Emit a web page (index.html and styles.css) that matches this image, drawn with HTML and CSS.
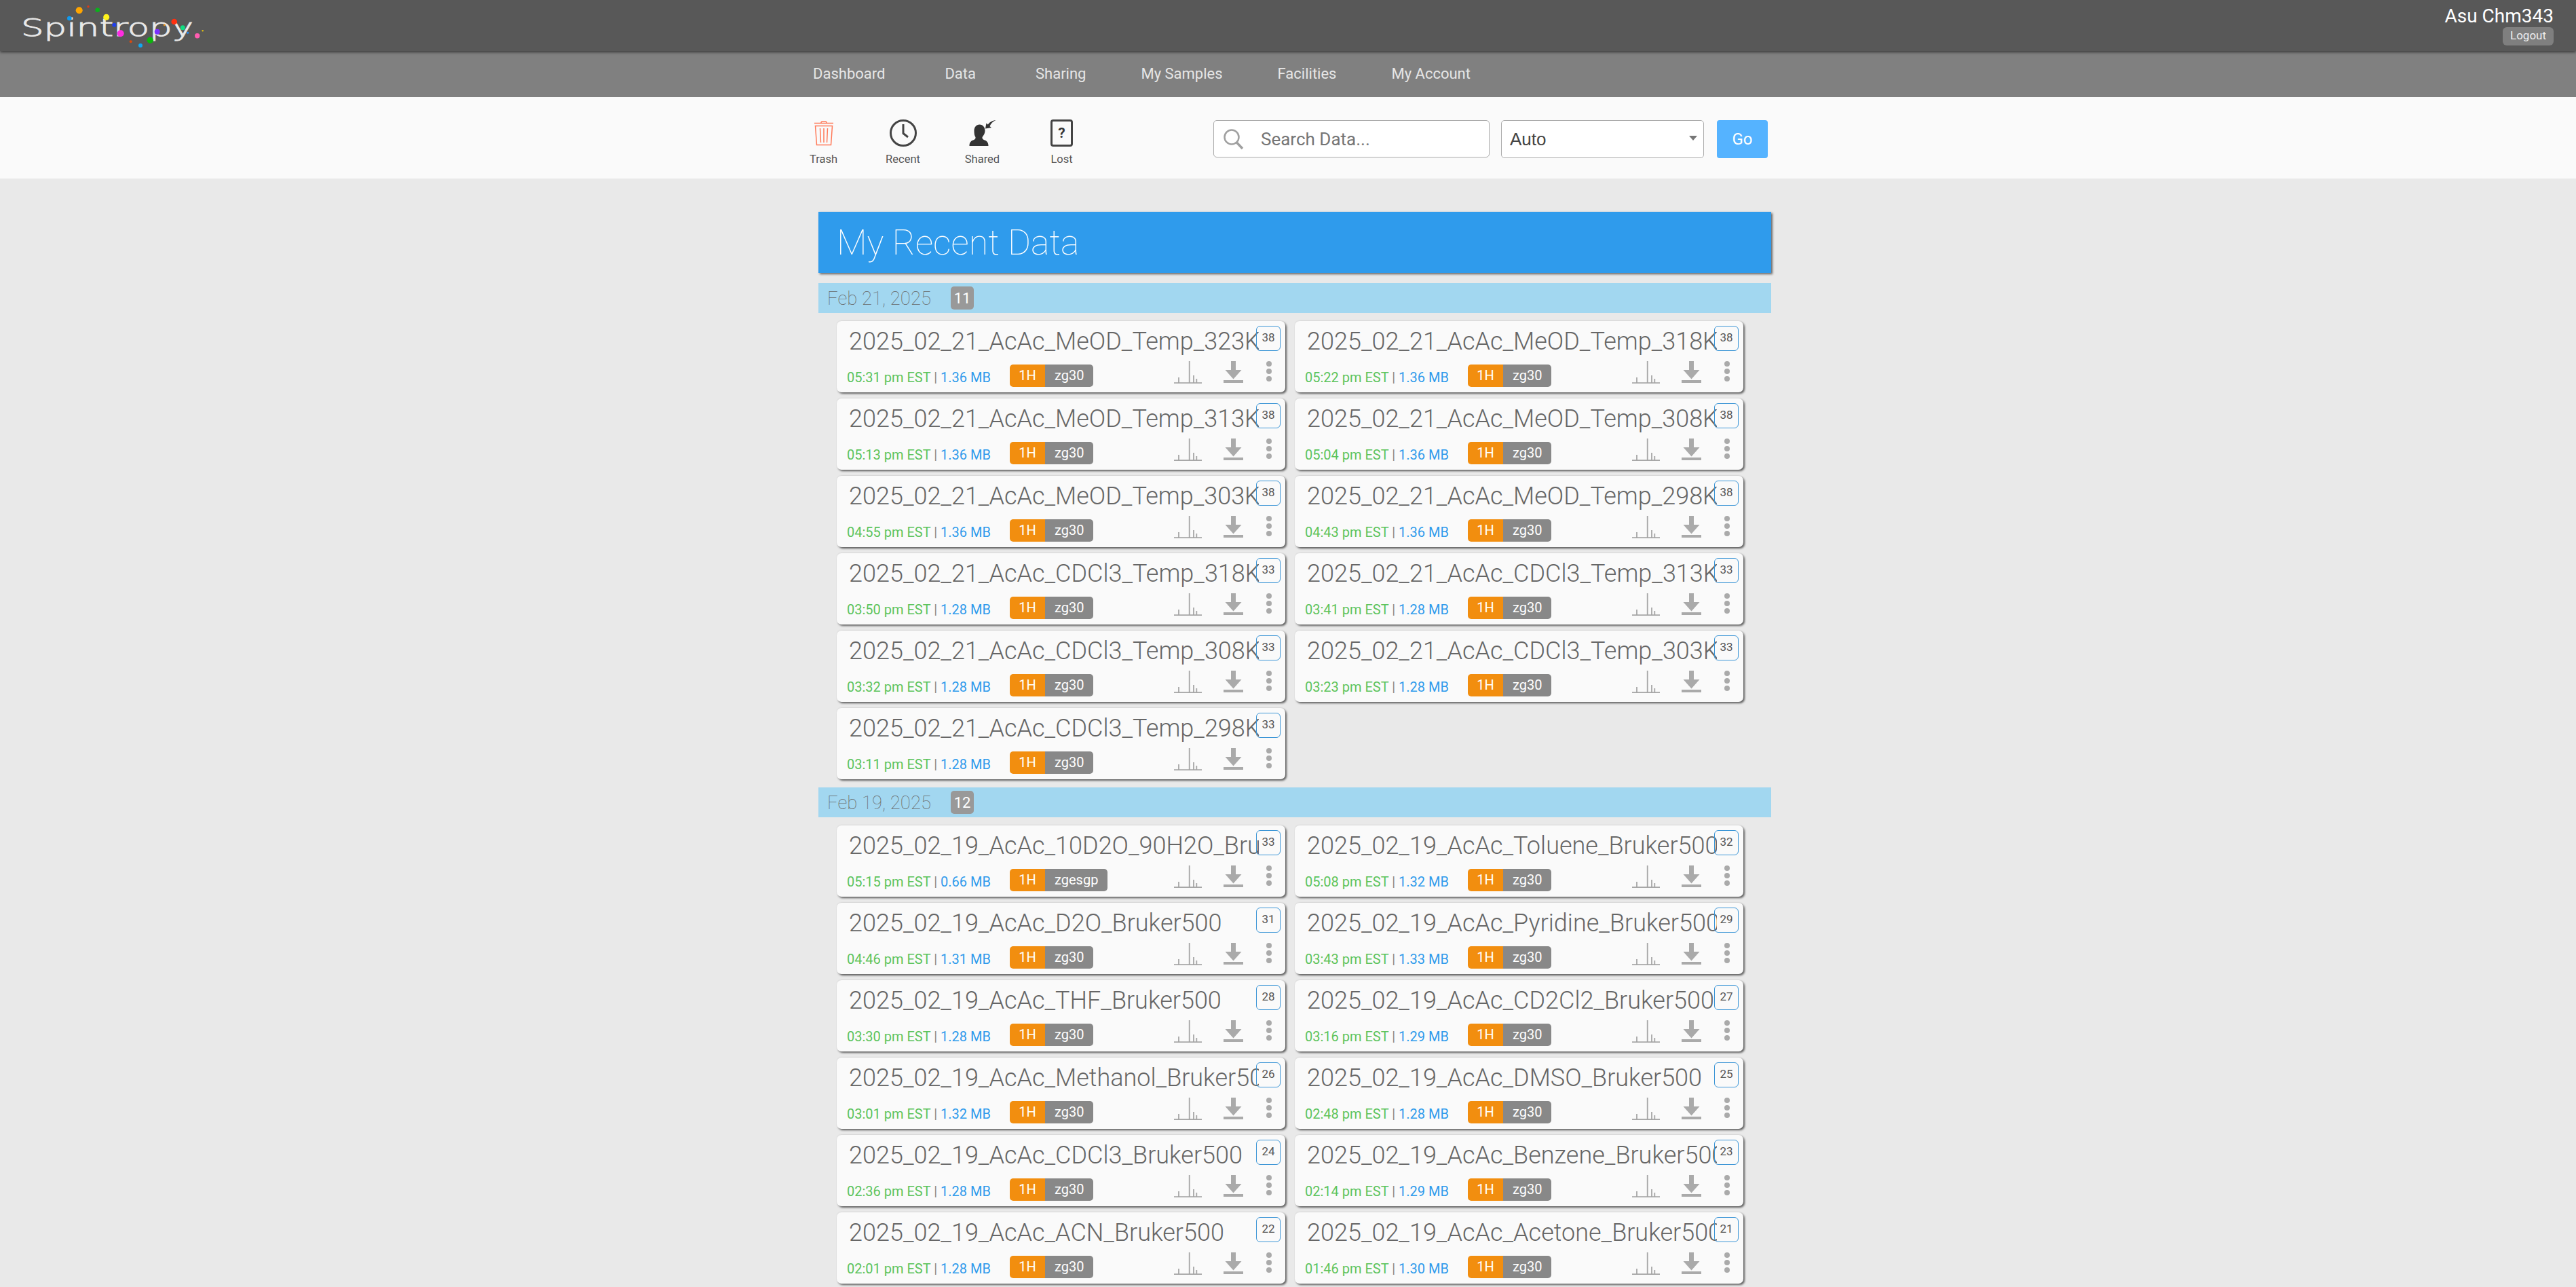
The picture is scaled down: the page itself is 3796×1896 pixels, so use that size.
FILE: index.html
```html
<!DOCTYPE html>
<html lang="en">
<head>
<meta charset="utf-8">
<title>Spintropy</title>
<link rel="stylesheet" href="styles.css">
</head>
<body>
<svg class="defs" width="0" height="0">
  <symbol id="spec" viewBox="0 0 41 33"><path d="M0 32.200H41M7 32V24M22.700 32V0M29 32V21M33.300 32V26" fill="none" stroke="#a6a6a6" stroke-width="1.800"/></symbol>
  <symbol id="down" viewBox="0 0 29 32"><path d="M11 0h7v13h8.500L14.500 26.500 2.500 13H11zM0 28h29v4H0z" fill="#aaa"/></symbol>
  <symbol id="dots" viewBox="0 0 8 30"><circle cx="4" cy="4" r="4" fill="#aaa"/><circle cx="4" cy="15" r="4" fill="#aaa"/><circle cx="4" cy="26" r="4" fill="#aaa"/></symbol>
</svg>
<header class="topbar">
  <svg class="logo" width="310" height="75" viewBox="0 0 310 75">
    <circle cx="168.300" cy="36.700" r="3" fill="#2040ee"/>
    <text class="logo-text" x="31" y="52.500" textLength="254" lengthAdjust="spacingAndGlyphs">Spintropy</text>
    <circle cx="116.700" cy="15.300" r="5" fill="#ffa500"/>
    <circle cx="130" cy="9.700" r="1.700" fill="#d83a1a"/>
    <circle cx="143.700" cy="14.700" r="3.300" fill="#0bb01b"/>
    <circle cx="156.700" cy="25.300" r="4.500" fill="#fff21c"/>
    <circle cx="102.300" cy="27" r="3.300" fill="#1099ee"/>
    <circle cx="177.700" cy="49.300" r="5" fill="#ff2de0"/>
    <circle cx="256.700" cy="32" r="4.300" fill="#ff3010"/>
    <circle cx="242.300" cy="36.700" r="1.500" fill="#e8901a"/>
    <circle cx="269.300" cy="40.700" r="3.500" fill="#10dc80"/>
    <circle cx="231.700" cy="46.700" r="4" fill="#7a30ff"/>
    <circle cx="276.700" cy="48.300" r="1.500" fill="#2090ff"/>
    <circle cx="290.700" cy="52.700" r="3.700" fill="#ff5cb0"/>
    <circle cx="298.700" cy="45.300" r="1.200" fill="#e0c010"/>
    <circle cx="221.300" cy="59.300" r="4.700" fill="#0bb50b"/>
    <circle cx="192.700" cy="61.300" r="2" fill="#d84a10"/>
    <circle cx="207" cy="67" r="3" fill="#10a8f0"/>
  </svg>
  <div class="user">
    <div class="user-name">Asu Chm343</div>
    <div class="logout">Logout</div>
  </div>
</header>
<nav class="navbar">
  <a>Dashboard</a><a>Data</a><a>Sharing</a><a class="tight">My Samples</a><a class="tight">Facilities</a><a class="tight">My Account</a>
</nav>
<section class="toolbar">
  <div class="tools">
    <div class="tool">
      <svg class="tool-icon" width="40" height="40" viewBox="0 0 40 40"><path d="M6 5.500H34M16 5.500V4.200Q16 3 18 3H22Q24 3 24 4.200V5.500M7.500 9.500H32.500L30.500 37.500H9.500ZM14.500 13L15.500 34M20 13V34M25.500 13L24.500 34" fill="none" stroke="#ff7a59" stroke-width="1.500"/></svg>
      <span>Trash</span>
    </div>
    <div class="tool">
      <svg class="tool-icon" width="42" height="40" viewBox="0 0 42 40"><circle cx="21" cy="20" r="18.500" fill="none" stroke="#444" stroke-width="3"/><path d="M21 7V20.500L28 26" fill="none" stroke="#444" stroke-width="3"/></svg>
      <span>Recent</span>
    </div>
    <div class="tool">
      <svg class="tool-icon" width="40" height="40" viewBox="0 0 40 40"><path d="M15.500 7.500C20.500 7.500 23.500 11.500 23.500 16.500C23.500 21 21 24 19.500 26C19 28 20.500 29.500 23 30.500C27 32 28.500 34.500 28.500 39H.5C.5 34.500 2 32 6 30.500C8.500 29.500 10 28 9.500 26C8 24 7.500 21 7.500 16.500C7.500 11.500 10.500 7.500 15.500 7.500Z" fill="#333"/><path d="M24 13.500L25.500 5.500L27.800 7.600C30 4 34 1.500 39.500 1C35 3 32 6 30.500 10L33 12Z" fill="#333"/></svg>
      <span>Shared</span>
    </div>
    <div class="tool">
      <div class="lost-icon">?</div>
      <span>Lost</span>
    </div>
  </div>
  <form class="search">
    <div class="search-box">
      <svg width="32" height="30" viewBox="0 0 32 30"><circle cx="13" cy="12" r="10.500" fill="none" stroke="#a0a0a0" stroke-width="2.500"/><path d="M20.500 20L29 29" stroke="#a0a0a0" stroke-width="3.500"/></svg>
      <span>Search Data...</span>
    </div>
    <div class="select"><span>Auto</span><i class="caret"></i></div>
    <div class="go">Go</div>
  </form>
</section>
<main class="content">
  <h1 class="page-title">My Recent Data</h1>

  <h2 class="date-bar"><span>Feb 21, 2025</span><b>11</b></h2>
  <div class="cards">
    <article class="card"><div class="name">2025_02_21_AcAc_MeOD_Temp_323K</div><span class="count">38</span><div class="meta"><div class="info"><em>05:31 pm EST</em> | <u>1.36 MB</u></div><div class="pill"><b>1H</b><i>zg30</i></div><div class="actions"><svg class="a-spec"><use href="#spec"/></svg><svg class="a-down"><use href="#down"/></svg><svg class="a-dots"><use href="#dots"/></svg></div></div></article>
    <article class="card"><div class="name">2025_02_21_AcAc_MeOD_Temp_318K</div><span class="count">38</span><div class="meta"><div class="info"><em>05:22 pm EST</em> | <u>1.36 MB</u></div><div class="pill"><b>1H</b><i>zg30</i></div><div class="actions"><svg class="a-spec"><use href="#spec"/></svg><svg class="a-down"><use href="#down"/></svg><svg class="a-dots"><use href="#dots"/></svg></div></div></article>
    <article class="card"><div class="name">2025_02_21_AcAc_MeOD_Temp_313K</div><span class="count">38</span><div class="meta"><div class="info"><em>05:13 pm EST</em> | <u>1.36 MB</u></div><div class="pill"><b>1H</b><i>zg30</i></div><div class="actions"><svg class="a-spec"><use href="#spec"/></svg><svg class="a-down"><use href="#down"/></svg><svg class="a-dots"><use href="#dots"/></svg></div></div></article>
    <article class="card"><div class="name">2025_02_21_AcAc_MeOD_Temp_308K</div><span class="count">38</span><div class="meta"><div class="info"><em>05:04 pm EST</em> | <u>1.36 MB</u></div><div class="pill"><b>1H</b><i>zg30</i></div><div class="actions"><svg class="a-spec"><use href="#spec"/></svg><svg class="a-down"><use href="#down"/></svg><svg class="a-dots"><use href="#dots"/></svg></div></div></article>
    <article class="card"><div class="name">2025_02_21_AcAc_MeOD_Temp_303K</div><span class="count">38</span><div class="meta"><div class="info"><em>04:55 pm EST</em> | <u>1.36 MB</u></div><div class="pill"><b>1H</b><i>zg30</i></div><div class="actions"><svg class="a-spec"><use href="#spec"/></svg><svg class="a-down"><use href="#down"/></svg><svg class="a-dots"><use href="#dots"/></svg></div></div></article>
    <article class="card"><div class="name">2025_02_21_AcAc_MeOD_Temp_298K</div><span class="count">38</span><div class="meta"><div class="info"><em>04:43 pm EST</em> | <u>1.36 MB</u></div><div class="pill"><b>1H</b><i>zg30</i></div><div class="actions"><svg class="a-spec"><use href="#spec"/></svg><svg class="a-down"><use href="#down"/></svg><svg class="a-dots"><use href="#dots"/></svg></div></div></article>
    <article class="card"><div class="name">2025_02_21_AcAc_CDCl3_Temp_318K</div><span class="count">33</span><div class="meta"><div class="info"><em>03:50 pm EST</em> | <u>1.28 MB</u></div><div class="pill"><b>1H</b><i>zg30</i></div><div class="actions"><svg class="a-spec"><use href="#spec"/></svg><svg class="a-down"><use href="#down"/></svg><svg class="a-dots"><use href="#dots"/></svg></div></div></article>
    <article class="card"><div class="name">2025_02_21_AcAc_CDCl3_Temp_313K</div><span class="count">33</span><div class="meta"><div class="info"><em>03:41 pm EST</em> | <u>1.28 MB</u></div><div class="pill"><b>1H</b><i>zg30</i></div><div class="actions"><svg class="a-spec"><use href="#spec"/></svg><svg class="a-down"><use href="#down"/></svg><svg class="a-dots"><use href="#dots"/></svg></div></div></article>
    <article class="card"><div class="name">2025_02_21_AcAc_CDCl3_Temp_308K</div><span class="count">33</span><div class="meta"><div class="info"><em>03:32 pm EST</em> | <u>1.28 MB</u></div><div class="pill"><b>1H</b><i>zg30</i></div><div class="actions"><svg class="a-spec"><use href="#spec"/></svg><svg class="a-down"><use href="#down"/></svg><svg class="a-dots"><use href="#dots"/></svg></div></div></article>
    <article class="card"><div class="name">2025_02_21_AcAc_CDCl3_Temp_303K</div><span class="count">33</span><div class="meta"><div class="info"><em>03:23 pm EST</em> | <u>1.28 MB</u></div><div class="pill"><b>1H</b><i>zg30</i></div><div class="actions"><svg class="a-spec"><use href="#spec"/></svg><svg class="a-down"><use href="#down"/></svg><svg class="a-dots"><use href="#dots"/></svg></div></div></article>
    <article class="card"><div class="name">2025_02_21_AcAc_CDCl3_Temp_298K</div><span class="count">33</span><div class="meta"><div class="info"><em>03:11 pm EST</em> | <u>1.28 MB</u></div><div class="pill"><b>1H</b><i>zg30</i></div><div class="actions"><svg class="a-spec"><use href="#spec"/></svg><svg class="a-down"><use href="#down"/></svg><svg class="a-dots"><use href="#dots"/></svg></div></div></article>
  </div>

  <h2 class="date-bar"><span>Feb 19, 2025</span><b>12</b></h2>
  <div class="cards">
    <article class="card"><div class="name">2025_02_19_AcAc_10D2O_90H2O_Bruker500</div><span class="count">33</span><div class="meta"><div class="info"><em>05:15 pm EST</em> | <u>0.66 MB</u></div><div class="pill"><b>1H</b><i>zgesgp</i></div><div class="actions"><svg class="a-spec"><use href="#spec"/></svg><svg class="a-down"><use href="#down"/></svg><svg class="a-dots"><use href="#dots"/></svg></div></div></article>
    <article class="card"><div class="name">2025_02_19_AcAc_Toluene_Bruker500</div><span class="count">32</span><div class="meta"><div class="info"><em>05:08 pm EST</em> | <u>1.32 MB</u></div><div class="pill"><b>1H</b><i>zg30</i></div><div class="actions"><svg class="a-spec"><use href="#spec"/></svg><svg class="a-down"><use href="#down"/></svg><svg class="a-dots"><use href="#dots"/></svg></div></div></article>
    <article class="card"><div class="name">2025_02_19_AcAc_D2O_Bruker500</div><span class="count">31</span><div class="meta"><div class="info"><em>04:46 pm EST</em> | <u>1.31 MB</u></div><div class="pill"><b>1H</b><i>zg30</i></div><div class="actions"><svg class="a-spec"><use href="#spec"/></svg><svg class="a-down"><use href="#down"/></svg><svg class="a-dots"><use href="#dots"/></svg></div></div></article>
    <article class="card"><div class="name">2025_02_19_AcAc_Pyridine_Bruker500</div><span class="count">29</span><div class="meta"><div class="info"><em>03:43 pm EST</em> | <u>1.33 MB</u></div><div class="pill"><b>1H</b><i>zg30</i></div><div class="actions"><svg class="a-spec"><use href="#spec"/></svg><svg class="a-down"><use href="#down"/></svg><svg class="a-dots"><use href="#dots"/></svg></div></div></article>
    <article class="card"><div class="name">2025_02_19_AcAc_THF_Bruker500</div><span class="count">28</span><div class="meta"><div class="info"><em>03:30 pm EST</em> | <u>1.28 MB</u></div><div class="pill"><b>1H</b><i>zg30</i></div><div class="actions"><svg class="a-spec"><use href="#spec"/></svg><svg class="a-down"><use href="#down"/></svg><svg class="a-dots"><use href="#dots"/></svg></div></div></article>
    <article class="card"><div class="name">2025_02_19_AcAc_CD2Cl2_Bruker500</div><span class="count">27</span><div class="meta"><div class="info"><em>03:16 pm EST</em> | <u>1.29 MB</u></div><div class="pill"><b>1H</b><i>zg30</i></div><div class="actions"><svg class="a-spec"><use href="#spec"/></svg><svg class="a-down"><use href="#down"/></svg><svg class="a-dots"><use href="#dots"/></svg></div></div></article>
    <article class="card"><div class="name">2025_02_19_AcAc_Methanol_Bruker500</div><span class="count">26</span><div class="meta"><div class="info"><em>03:01 pm EST</em> | <u>1.32 MB</u></div><div class="pill"><b>1H</b><i>zg30</i></div><div class="actions"><svg class="a-spec"><use href="#spec"/></svg><svg class="a-down"><use href="#down"/></svg><svg class="a-dots"><use href="#dots"/></svg></div></div></article>
    <article class="card"><div class="name">2025_02_19_AcAc_DMSO_Bruker500</div><span class="count">25</span><div class="meta"><div class="info"><em>02:48 pm EST</em> | <u>1.28 MB</u></div><div class="pill"><b>1H</b><i>zg30</i></div><div class="actions"><svg class="a-spec"><use href="#spec"/></svg><svg class="a-down"><use href="#down"/></svg><svg class="a-dots"><use href="#dots"/></svg></div></div></article>
    <article class="card"><div class="name">2025_02_19_AcAc_CDCl3_Bruker500</div><span class="count">24</span><div class="meta"><div class="info"><em>02:36 pm EST</em> | <u>1.28 MB</u></div><div class="pill"><b>1H</b><i>zg30</i></div><div class="actions"><svg class="a-spec"><use href="#spec"/></svg><svg class="a-down"><use href="#down"/></svg><svg class="a-dots"><use href="#dots"/></svg></div></div></article>
    <article class="card"><div class="name">2025_02_19_AcAc_Benzene_Bruker500</div><span class="count">23</span><div class="meta"><div class="info"><em>02:14 pm EST</em> | <u>1.29 MB</u></div><div class="pill"><b>1H</b><i>zg30</i></div><div class="actions"><svg class="a-spec"><use href="#spec"/></svg><svg class="a-down"><use href="#down"/></svg><svg class="a-dots"><use href="#dots"/></svg></div></div></article>
    <article class="card"><div class="name">2025_02_19_AcAc_ACN_Bruker500</div><span class="count">22</span><div class="meta"><div class="info"><em>02:01 pm EST</em> | <u>1.28 MB</u></div><div class="pill"><b>1H</b><i>zg30</i></div><div class="actions"><svg class="a-spec"><use href="#spec"/></svg><svg class="a-down"><use href="#down"/></svg><svg class="a-dots"><use href="#dots"/></svg></div></div></article>
    <article class="card"><div class="name">2025_02_19_AcAc_Acetone_Bruker500</div><span class="count">21</span><div class="meta"><div class="info"><em>01:46 pm EST</em> | <u>1.30 MB</u></div><div class="pill"><b>1H</b><i>zg30</i></div><div class="actions"><svg class="a-spec"><use href="#spec"/></svg><svg class="a-down"><use href="#down"/></svg><svg class="a-dots"><use href="#dots"/></svg></div></div></article>
  </div>
</main>
</body>
</html>
```
FILE: styles.css
```css
* { box-sizing: border-box; }
html, body { margin: 0; height: 100%; overflow: hidden; }
body { background: #e9e9e9; font-family: Roboto, "Liberation Sans", sans-serif; color: #555; }
.defs { display: block; height: 0; }

.topbar {
  height: 75px; background: #585858; display: flex; justify-content: space-between;
  box-shadow: 0 2px 4px rgba(0,0,0,.55); position: relative; z-index: 2;
}
.logo { display: block; overflow: visible; }
.logo-text { font-family: "DejaVu Sans", sans-serif; font-size: 36px; font-weight: 200; fill: #e8e8e8; stroke: #e8e8e8; stroke-width: .9px; }
.user { display: flex; flex-direction: column; align-items: flex-end; padding: 7px 33px 0 0; }
.user-name { font-size: 28px; line-height: 33px; color: #fff; }
.logout { height: 27px; width: 75px; background: #7f7f7f; border-radius: 6px; color: #eee; font-size: 17px; line-height: 25px; text-align: center; }

.navbar { height: 68px; background: #808080; display: flex; gap: 88px; padding-left: 1198px; align-items: center; }
.navbar a { font-size: 22px; color: #e6e6e6; line-height: 26px; }
.navbar a.tight { margin-left: -7px; }

.toolbar { height: 120px; background: #fafafa; display: flex; position: relative; padding-left: 1155px; }
.tools { display: flex; width: 633px; padding-top: 33px; }
.tool { width: 117px; display: flex; flex-direction: column; align-items: center; }
.tool span { font-size: 16.500px; line-height: 20px; margin-top: 9px; color: #555; }
.tool-icon { display: block; }
.lost-icon { width: 33px; height: 40px; border: 3px solid #444; border-radius: 4px; font-weight: 700; font-size: 21px; color: #333; text-align: center; line-height: 34px; }

.search { display: flex; padding-top: 34px; align-items: flex-start; }
.search-box { width: 407px; height: 55px; background: #fff; border: 1.5px solid #aaa; border-radius: 5px; display: flex; align-items: center; padding-left: 13px; gap: 24px; }
.search-box span { font-size: 26px; color: #757575; }
.select { width: 299px; height: 56px; margin-left: 17px; background: #fff; border: 1.5px solid #aaa; border-radius: 5px; display: flex; align-items: center; justify-content: space-between; padding: 0 9px 0 12px; }
.select span { font-family: "Liberation Sans", sans-serif; font-size: 26px; color: #444; }
.caret { width: 0; height: 0; border-left: 6px solid transparent; border-right: 6px solid transparent; border-top: 7px solid #777; margin-top: -4px; }
.go { width: 75px; height: 56px; margin-left: 19px; background: #55b3ff; border-radius: 4px; color: #fff; font-size: 24px; line-height: 56px; text-align: center; }

.content { width: 1404px; margin-left: 1206px; padding-top: 49px; }
.page-title {
  height: 90px; margin: 0 0 15px; padding-left: 27px; background: #2f9bec; color: #fff;
  font-size: 52px; font-weight: 100; line-height: 92px;
  box-shadow: 2px 2px 3px rgba(0,0,0,.55);
}
.date-bar { height: 44px; margin: 0; background: #a2d7f0; display: flex; align-items: center; padding-left: 13px; font-weight: 100; }
.date-bar span { font-size: 27.500px; width: 182px; color: #666; }
.date-bar b { width: 34px; height: 34px; background: #999; border-radius: 5px; color: #fff; font-size: 22px; font-weight: 400; line-height: 36px; text-align: center; }

.cards { display: grid; grid-template-columns: 661px 661px; gap: 9px 14px; padding: 12px 0 12px 27px; }
.card { height: 105px; background: #fafafa; border-radius: 7px; position: relative; box-shadow: 2px 2px 3px rgba(0,0,0,.6), 0 -1px 2px rgba(0,0,0,.06); }
.name { width: 622px; height: 64px; padding: 3px 0 0 18px; overflow: hidden; white-space: nowrap; font-size: 36px; font-weight: 300; line-height: 54px; color: #666; }
.count { position: absolute; top: 7px; right: 7px; width: 36px; height: 37px; border: 1.5px solid #3b95d6; border-radius: 6px; color: #555; font-size: 17px; line-height: 32px; text-align: center; }
.meta { display: flex; align-items: flex-start; padding-left: 15px; }
.info { width: 240px; font-size: 20px; line-height: 33px; padding-top: 3px; color: #888; }
.info em { font-style: normal; color: #5cc45c; }
.info u { text-decoration: none; color: #2f9bec; }
.pill { display: flex; height: 33px; border-radius: 5px; overflow: hidden; font-size: 20px; line-height: 33px; color: #fff; }
.pill b { width: 52px; background: #f28e0f; font-weight: 400; text-align: center; }
.pill i { background: #888; font-style: normal; padding: 0 14px; }
.actions { position: absolute; right: 20px; top: 59px; display: flex; align-items: flex-start; }
.a-spec { width: 41px; height: 33px; margin-right: 32px; }
.a-down { width: 29px; height: 32px; margin-right: 34px; }
.a-dots { width: 8px; height: 30px; }
```
